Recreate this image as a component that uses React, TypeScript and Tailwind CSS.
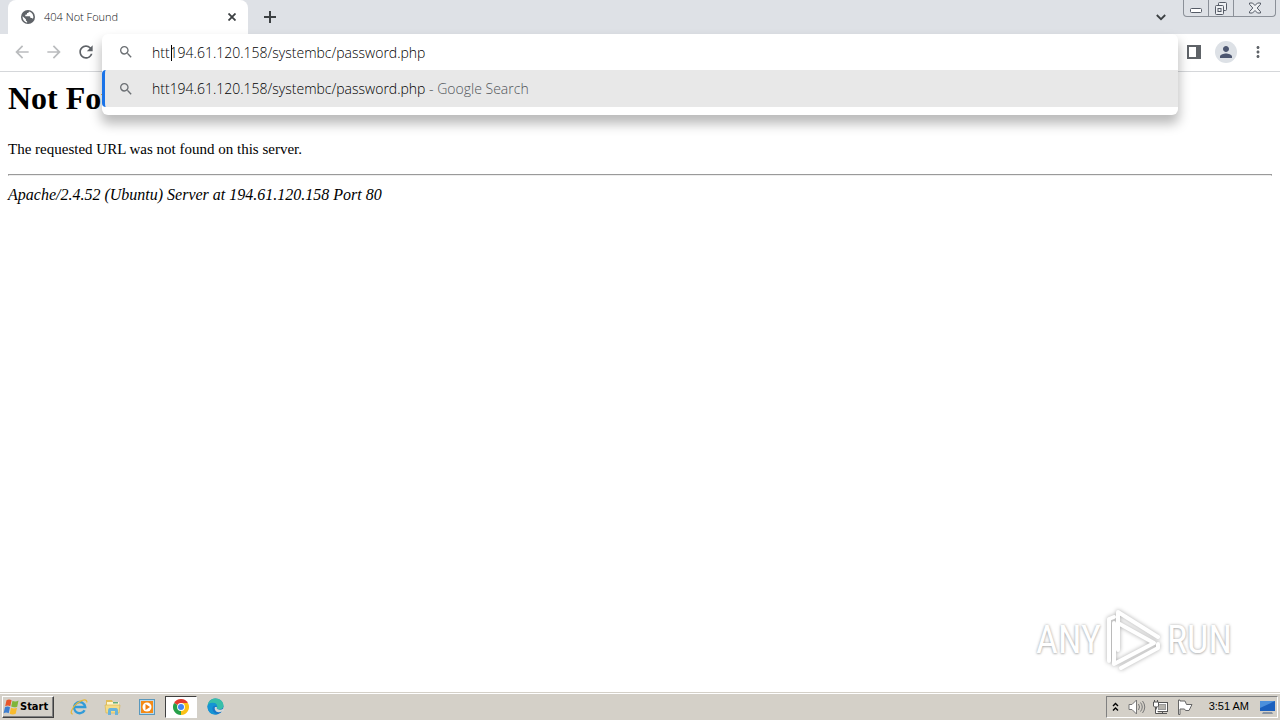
import React, { useState } from 'react';
import { MdArrowBack, MdArrowForward, MdPerson, MdRefresh, MdMoreVert, MdSearch } from 'react-icons/md';

function GlobeIcon() {
  return (
    <svg width="16" height="16" viewBox="0 0 16 16" aria-hidden="true">
      <circle cx="8" cy="8" r="7" fill="#5f6368" />
      <path d="M2.6 7.2l3.3 3.1v1.2l1.2 1v1.2A5.7 5.7 0 0 1 2.6 7.2z" fill="#fff" />
      <path d="M9 2.4c-.2 1.300-.8 1.500-1.900 1.600L6.900 5.500 5.300 5.700v1.500h4.300c.7 0 .8.7.8 1.900h1.300c.7 0 1 .4 1.200.9A5.700 5.700 0 0 0 9 2.400z" fill="#fff" />
    </svg>
  );
}

function TabStrip() {
  return (
    <header className="flex h-[34px] shrink-0 bg-[#dee1e6] pl-2">
      <div className="flex w-60 items-center rounded-t-lg bg-white pl-3 pr-2">
        <GlobeIcon />
        <span className="ml-2 flex-1 text-[11px] font-light text-[#101214]">404 Not Found</span>
        <button aria-label="Close tab" className="flex size-4 items-center justify-center">
          <svg width="8" height="8" viewBox="0 0 8 8" stroke="#3c4043" strokeWidth="1.800">
            <path d="M.5.5l7 7M7.500.5l-7 7" />
          </svg>
        </button>
      </div>
      <button aria-label="New tab" className="ml-2 flex w-7 items-center justify-center">
        <svg width="12" height="12" viewBox="0 0 12 12" stroke="#3c4043" strokeWidth="2">
          <path d="M6 0v12M0 6h12" />
        </svg>
      </button>
      <div className="flex-1" />
      <button aria-label="Search tabs" className="mr-2 flex w-7 items-center justify-center">
        <svg width="10" height="7" viewBox="0 0 10 7" fill="none" stroke="#3c4043" strokeWidth="1.800">
          <path d="M.8 1l4.200 4.200L9.200 1" />
        </svg>
      </button>
      <WindowControls />
    </header>
  );
}

function WindowControls() {
  return (
    <div className="mr-1 flex h-[17px] w-[93px] divide-x divide-[#8b9098] rounded-b border border-t-0 border-[#8b9098] bg-[#dee1e6]">
      <button aria-label="Minimize" className="flex w-[25px] items-center justify-center">
        <svg width="12" height="16" viewBox="0 0 12 16" fill="#fff" stroke="#555b66">
          <rect x=".5" y="8.500" width="11" height="4" rx="1" />
        </svg>
      </button>
      <button aria-label="Restore" className="flex w-[25px] items-center justify-center">
        <svg width="14" height="14" viewBox="0 0 14 14" fill="#eef0f3" stroke="#555b66">
          <rect x="4.500" y="1.500" width="8" height="8" rx="1" />
          <rect x="1.500" y="4.500" width="8" height="9" rx="1" />
          <rect x="4" y="7.500" width="3" height="3" />
        </svg>
      </button>
      <button aria-label="Close" className="flex flex-1 items-center justify-center">
        <svg width="12" height="12" viewBox="0 0 12 12" fill="#eef0f3" stroke="#555b66">
          <path d="M.5 1h3L6 3.500 8.500 1h3v1.300L8.200 6l3.300 3.700V11h-3L6 8.500 3.500 11h-3V9.700L3.800 6 .5 2.300z" />
        </svg>
      </button>
    </div>
  );
}

function Omnibox() {
  const [query, setQuery] = useState('htt194.61.120.158/systembc/password.php');

  return (
    <div className="absolute inset-x-0 top-0 z-10 rounded-md bg-white pb-2 font-['Open_Sans',sans-serif] text-sm font-light text-black shadow-[0_8px_12px_1px_rgba(0,0,0,0.27)]">
      <div className="relative flex h-9 items-center pl-4">
        <MdSearch size={16} className="mr-[18px] text-[#6b6f73]" />
        <input
          aria-label="Address and search bar"
          className="h-full flex-1 bg-transparent outline-none"
          value={query}
          onChange={(e) => setQuery(e.target.value)}
        />
        <span className="absolute left-[69px] top-[11px] h-4 w-px bg-black" />
      </div>
      <button className="flex h-[37px] w-full items-center rounded-l border-l-[3px] border-[#1a73e8] bg-[#e8e8e8] pl-[13px] text-left">
        <MdSearch size={16} className="mr-[18px] text-[#6b6f73]" />
        <span>{query}</span>
        <span className="whitespace-pre text-[#50555a]"> - Google Search</span>
      </button>
    </div>
  );
}

function Toolbar() {
  return (
    <nav className="flex h-[38px] shrink-0 border-b border-[#d5d7da] bg-white pl-1.5 text-[#5f6368]">
      <button aria-label="Back" className="flex w-8 items-center justify-center pb-0.5 text-[#babcbe]">
        <MdArrowBack size={20} />
      </button>
      <button aria-label="Forward" className="flex w-8 items-center justify-center pb-0.5 text-[#babcbe]">
        <MdArrowForward size={20} />
      </button>
      <button aria-label="Reload" className="flex w-8 items-center justify-center pb-0.5">
        <MdRefresh size={20} />
      </button>
      <div className="relative flex-1">
        <Omnibox />
      </div>
      <button aria-label="Side panel" className="flex w-8 items-center justify-center pb-0.5">
        <svg width="14" height="14" viewBox="0 0 14 14">
          <path fill="#5f6368" fillRule="evenodd" d="M0 0h14v14H0zM2 2v10h7V2z" />
        </svg>
      </button>
      <button aria-label="Profile" className="flex w-8 items-center justify-center pb-0.5">
        <span className="flex size-[22px] items-center justify-center rounded-full bg-[#dde1e6]">
          <MdPerson size={18} className="text-[#4c5670]" />
        </span>
      </button>
      <button aria-label="Menu" className="mr-1.5 flex w-8 items-center justify-center pb-0.5">
        <MdMoreVert size={18} />
      </button>
    </nav>
  );
}

function Watermark() {
  return (
    <div className="absolute bottom-5 right-12 flex items-center gap-1 font-['Liberation_Sans_Narrow','Roboto_Condensed',sans-serif] text-[38px] leading-none text-white [text-shadow:0_0_3px_#aaa,0_1px_2px_#ccc]">
      <span>ANY</span>
      <svg width="58" height="64" viewBox="0 0 58 64" fill="none" className="drop-shadow-[0_0_2px_#aaa]">
        <g stroke="#fff" strokeWidth="4" strokeLinejoin="round" strokeLinecap="round">
          <path d="M4 53V11l5-2" />
          <path d="M13 42V4l40 25" />
          <path d="M13 15l36 20-40 21V15" />
          <path d="M16 60l37-20v-4" />
        </g>
      </svg>
      <span>RUN</span>
    </div>
  );
}

function PageContent() {
  return (
    <main className="relative flex-1 bg-white px-2 pt-2 font-['Liberation_Serif',serif] text-base text-black">
      <h1 className="text-[32px] font-bold leading-9">Not Found</h1>
      <p className="mt-6 text-[15px] leading-[18px]">The requested URL was not found on this server.</p>
      <hr className="mt-4 border border-[#9a9a9a] border-b-[#eee]" />
      <address className="mt-2.5 leading-[18px]">Apache/2.4.52 (Ubuntu) Server at 194.61.120.158 Port 80</address>
      <Watermark />
    </main>
  );
}

function WindowsFlag() {
  return (
    <svg width="17" height="16" viewBox="0 0 17 16" aria-hidden="true">
      <path d="M3.500 1.200C5 .2 7 .2 8.600 1.200L7.300 7.300C5.700 6.400 4 6.400 2.200 7.200z" fill="#e8562a" />
      <path d="M9.500 1.700c1.800 1 3.900.9 6-.2l-1.300 6.200c-2 .9-4 .9-6-.1z" fill="#7fb539" />
      <path d="M2 8.200c1.700-.9 3.500-.8 5 .1l-1.300 6c-1.600-.9-3.400-.9-5.100-.1z" fill="#3d7ed0" />
      <path d="M8 8.800c1.900 1 4 1 6 0l-1.300 6c-2 .9-4 .9-6-.1z" fill="#f8bb2d" />
    </svg>
  );
}

function ExplorerIcon() {
  return (
    <svg width="18" height="18" viewBox="0 0 18 18" fill="none">
      <path d="M14.600 12.200a5.600 5.600 0 1 1 .6-3.200H5" stroke="#319bd8" strokeWidth="2.400" />
      <path d="M2.800 15.900C-.5 16.500 1.500 9.500 7.500 5 12.200 1.500 17.500.5 16.800 4.500" stroke="#e5b83c" strokeWidth="1.300" />
    </svg>
  );
}

function FolderIcon() {
  return (
    <svg width="18" height="18" viewBox="0 0 18 18">
      <path d="M2 2h6l1 2h6v11H2z" fill="#e2bd58" />
      <path d="M3 4h12v4H3z" fill="#fff6cb" />
      <path d="M9 4h5v1.500H9z" fill="#62ad7b" />
      <path d="M1 7h15l-1 8H2z" fill="#f5dc86" stroke="#d6b658" strokeWidth=".7" />
      <path d="M4 17v-4q0-3 2-3h6q2 0 2 3v4h-3v-4H7v4z" fill="#69b3da" />
    </svg>
  );
}

function MediaIcon() {
  return (
    <svg width="18" height="18" viewBox="0 0 18 18">
      <rect x="1.500" y="1.500" width="15" height="15" fill="#b9d9ec" stroke="#5998bd" />
      <rect x="3" y="3" width="12" height="12" fill="#f48a16" />
      <circle cx="9" cy="9" r="4.500" fill="#fff" />
      <path d="M7.500 6l4.500 3-4.500 3z" fill="#ef7e12" />
    </svg>
  );
}

function ChromeIcon() {
  return (
    <svg width="16" height="16" viewBox="0 0 16 16">
      <path d="M8 8L1.070 4A8 8 0 0 1 14.930 4z" fill="#e33b2e" />
      <path d="M8 8L14.930 4A8 8 0 0 1 8 16z" fill="#fbc116" />
      <path d="M8 8v8A8 8 0 0 1 1.070 4z" fill="#27a049" />
      <path d="M8 4h6.930L11.500 10 8 16l3.500-6z" fill="#fbc116" />
      <circle cx="8" cy="8" r="3.900" fill="#fff" />
      <circle cx="8" cy="8" r="3" fill="#4285f4" />
    </svg>
  );
}

function EdgeIcon() {
  return (
    <svg width="17" height="17" viewBox="0 0 17 17">
      <circle cx="8.500" cy="8.500" r="8" fill="#1877c8" />
      <path d="M.6 8C1 3 4.500.5 8.500.5c5 0 8 3.500 8 7 0 2.500-2 4-4.300 4-1.700 0-2.500-.7-2.200-1.500C11 7 8.500 5 6 5 3.500 5 1.200 6.200.6 8z" fill="#37bfa9" />
      <path d="M.5 8.500C.8 6.200 3 4.700 5.500 4.700c2.700 0 5 1.800 4.600 4.600C9.500 7 6 7 5.500 10c-.4 3 2 5.500 5.500 6C5 18 .5 14 .5 8.500z" fill="#1595d4" />
      <path d="M10 9c-.8 1.200 0 2.500 2.200 2.700 1.700.1 3.200-.3 4.300-1.200l.5 2c-1.500 1.200-3.500 1.700-5.300 1.700C8.500 14.200 7 11 8 9z" fill="#d4d9d8" />
    </svg>
  );
}

const launchers = [
  { name: 'Internet Explorer', icon: <ExplorerIcon />, active: false },
  { name: 'File Explorer', icon: <FolderIcon />, active: false },
  { name: 'Media Player', icon: <MediaIcon />, active: false },
  { name: 'Google Chrome', icon: <ChromeIcon />, active: true },
  { name: 'Microsoft Edge', icon: <EdgeIcon />, active: false },
];

function SystemTray() {
  return (
    <div className="my-px mr-0.5 flex h-[22px] items-center border border-[#808080] border-b-white border-r-white pl-1 pr-px">
      <button aria-label="Show hidden icons">
        <svg width="9" height="10" viewBox="0 0 9 10" fill="none" stroke="#000" strokeWidth="1.400">
          <path d="M2 4l2.500-2.500L7 4M2 8.500L4.500 6 7 8.500" />
        </svg>
      </button>
      <svg className="ml-2" width="18" height="16" viewBox="0 0 18 16" fill="#fff" stroke="#777">
        <path d="M1 5.500h3L8.500 1v14L4 10.500H1z" />
        <path d="M10.500 5q2 3 0 6M12.500 3.500q3.500 4.500 0 9M14.500 2q4.500 6 0 12" fill="none" />
      </svg>
      <svg className="ml-1.5" width="17" height="16" viewBox="0 0 17 16" fill="#fff" stroke="#555">
        <rect x="4.500" y="3.500" width="11" height="9" fill="#fff" />
        <rect x="6.500" y="5.500" width="7" height="5" fill="#b5b3ad" stroke="#999" />
        <path d="M6 14.500h9M10.500 13v2M1.500 3h5v4l-1 1h-3l-1-1zM2.500 1v2M5.500 1v2M3.500 8v6.500h3" />
      </svg>
      <svg className="ml-2" width="16" height="16" viewBox="0 0 16 16" fill="#fff" stroke="#666">
        <path d="M1.500 1v14.500h1.500V10h4.500l1 1.500h3.500L15 5.500H9.500L8 2H3V1z" />
      </svg>
      <time className="ml-4 font-['Liberation_Sans',sans-serif] text-[11px] text-black">3:51 AM</time>
      <svg className="ml-2.5" width="17" height="16" viewBox="0 0 17 16">
        <path d="M1 2h15v10H1z" fill="#1b60be" />
        <path d="M1 2h15L1 9z" fill="#4c90dc" />
        <path d="M4 13h9l1 2H3z" fill="#8793a2" />
      </svg>
    </div>
  );
}

function Taskbar() {
  return (
    <footer className="flex h-7 shrink-0 items-center border-t border-[#d4d0c8] bg-[#d4d0c8] pl-0.5 shadow-[inset_0_1px_0_#fff]">
      <button className="flex h-[22px] w-[52px] items-center border border-white border-b-[#404040] border-r-[#404040] font-['DejaVu_Sans_Condensed','DejaVu_Sans',sans-serif] text-[11px] font-bold text-black shadow-[inset_-1px_-1px_0_#808080]">
        <WindowsFlag />
        <span className="pt-0.5">Start</span>
      </button>
      <div className="ml-[9px] flex gap-0.5">
        {launchers.map((app) => (
          <button
            key={app.name}
            aria-label={app.name}
            className={
              app.active
                ? 'flex h-[22px] w-8 items-center justify-center border border-[#404040] border-b-white border-r-white bg-white'
                : 'flex h-[22px] w-8 items-center justify-center'
            }
          >
            {app.icon}
          </button>
        ))}
      </div>
      <div className="flex-1" />
      <SystemTray />
    </footer>
  );
}

export default function App() {
  return (
    <div className="flex min-h-screen flex-col bg-white font-['Open_Sans',sans-serif]">
      <TabStrip />
      <Toolbar />
      <PageContent />
      <Taskbar />
    </div>
  );
}
